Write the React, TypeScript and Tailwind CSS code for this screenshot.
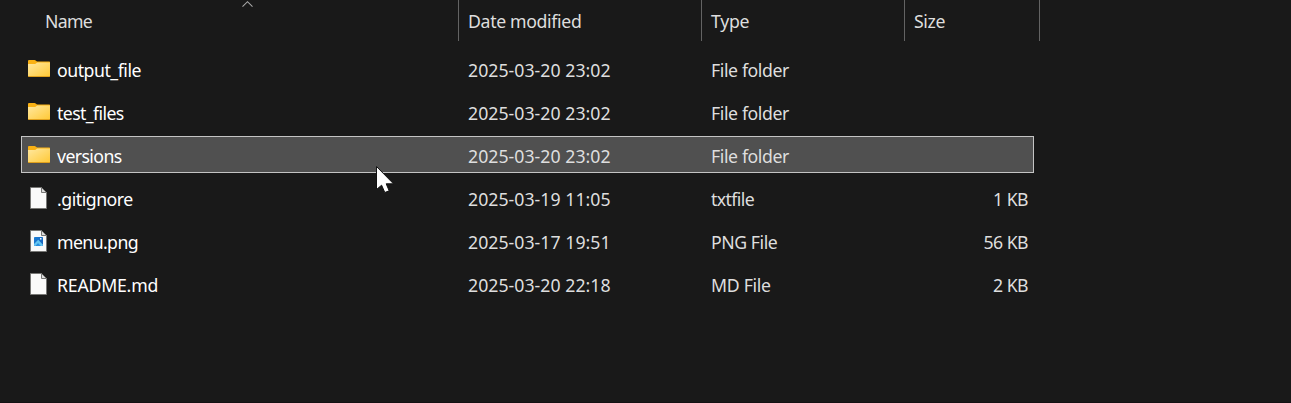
import type { ReactNode } from "react";

type Kind = "folder" | "file" | "image";

interface Entry {
  name: string;
  nameClass: string;
  date: string;
  type: string;
  typeClass: string;
  size?: string;
  kind: Kind;
  selected?: boolean;
}

const entries: Entry[] = [
  { name: "output_file", nameClass: "tracking-[-0.48px]", date: "2025-03-20 23:02", type: "File folder", typeClass: "tracking-[-0.4px]", kind: "folder" },
  { name: "test_files", nameClass: "tracking-[-0.6px]", date: "2025-03-20 23:02", type: "File folder", typeClass: "tracking-[-0.4px]", kind: "folder" },
  { name: "versions", nameClass: "tracking-[-0.6px]", date: "2025-03-20 23:02", type: "File folder", typeClass: "tracking-[-0.4px]", kind: "folder", selected: true },
  { name: ".gitignore", nameClass: "tracking-[-0.48px]", date: "2025-03-19 11:05", type: "txtfile", typeClass: "tracking-[-0.6px]", size: "1 KB", kind: "file" },
  { name: "menu.png", nameClass: "tracking-[-0.6px]", date: "2025-03-17 19:51", type: "PNG File", typeClass: "tracking-[-0.45px]", size: "56 KB", kind: "image" },
  { name: "README.md", nameClass: "tracking-[-0.22px]", date: "2025-03-20 22:18", type: "MD File", typeClass: "tracking-[-0.3px]", size: "2 KB", kind: "file" },
];

function FolderIcon() {
  return (
    <svg width="22" height="17" viewBox="0 0 22 17" className="mb-[3px] block">
      <defs>
        <linearGradient id="folderFront" x1="0" y1="0" x2="1" y2="1">
          <stop offset="0" stopColor="#ffe8a0" />
          <stop offset="1" stopColor="#ffc937" />
        </linearGradient>
      </defs>
      <path d="M0 1Q0 0 1 0H6.6Q7.2 0 7.7 .6L9 1.5H21.4Q22 1.5 22 2.2V16H0Z" fill="#f9b114" />
      <path d="M0 4H7.2L9.2 2.6H22V16.2H0Z" fill="url(#folderFront)" />
      <path d="M0 16H22V16.3Q22 17 21.3 17H.7Q0 17 0 16.3Z" fill="#e0a01c" />
    </svg>
  );
}

function FileIcon({ image = false }: { image?: boolean }) {
  return (
    <svg width="17" height="22" viewBox="0 0 17 22" className="mb-px ml-[2px] block">
      <defs>
        <linearGradient id="photo" x1="0" y1="0" x2="1" y2="1">
          <stop offset="0" stopColor="#1b7fd6" />
          <stop offset="1" stopColor="#1a5fb8" />
        </linearGradient>
      </defs>
      <path d="M.5 .5H11.5L16.5 5.5V21.5H.5Z" fill="#fafafa" stroke="#777775" />
      <path d="M11.5 .5V5.5H16.5Z" fill="#dcdcdc" stroke="#777775" />
      {image && (
        <g>
          <rect x="4" y="7" width="9" height="9" rx=".8" fill="url(#photo)" />
          <path d="M4 14L8.2 9.8L13 14.8V15Q13 16 12 16H10.5L8 13.5L5.5 16H5Q4 16 4 15Z" fill="#63c5f2" />
          <path d="M5.5 16L8 13.2L10.8 16Z" fill="#2a91df" />
          <rect x="10" y="8" width="1.5" height="1.5" fill="#e7f5ff" />
        </g>
      )}
    </svg>
  );
}

function HeaderCell({ children, className }: { children: ReactNode; className: string }) {
  return (
    <div className={`flex h-[41px] items-center border-r border-[#636363] text-[#dedede] ${className}`}>
      {children}
    </div>
  );
}

function Row({ entry }: { entry: Entry }) {
  return (
    <div
      className={`flex h-[37px] w-[1013px] items-center border pt-[2px] ${
        entry.selected ? "border-[#c4c4c4] bg-[#505050]" : "border-transparent"
      }`}
    >
      <div className="flex w-[446px] items-center pl-[6px]">
        <div className="w-[29px] shrink-0">
          {entry.kind === "folder" ? <FolderIcon /> : <FileIcon image={entry.kind === "image"} />}
        </div>
        <span className={`text-white ${entry.nameClass}`}>{entry.name}</span>
      </div>
      <div className="w-[243px] tracking-[0.03px] text-[#dedede]">{entry.date}</div>
      <div className={`w-[203px] text-[#dedede] ${entry.typeClass}`}>{entry.type}</div>
      <div className="flex-1 pr-[5px] text-right tracking-[-0.55px] text-[#dedede]">{entry.size}</div>
    </div>
  );
}

export default function App() {
  return (
    <main className="relative h-[403px] w-[1291px] cursor-default overflow-hidden border-b border-[#131113] bg-[#191919] font-['Noto_Sans',sans-serif] text-[17.7px] leading-6 whitespace-nowrap">
      <header className="flex">
        <HeaderCell className="w-[459px] pl-[45px] tracking-[-0.7px]">Name</HeaderCell>
        <HeaderCell className="w-[243px] pl-[9px] tracking-[-0.35px]">Date modified</HeaderCell>
        <HeaderCell className="w-[203px] pl-[9px] tracking-[-0.3px]">Type</HeaderCell>
        <HeaderCell className="w-[135px] pl-[9px] tracking-[-0.4px]">Size</HeaderCell>
      </header>
      <svg width="12" height="8" viewBox="0 0 12 8" className="absolute top-0 left-[242px]" fill="none" stroke="#a8a8a8" strokeWidth="1.1">
        <path d="M.5 6.7L5.5 1.7L10.5 6.7" />
      </svg>
      <section className="flex flex-col gap-[6px] pt-[9px] pl-[21px]">
        {entries.map((entry) => (
          <Row key={entry.name} entry={entry} />
        ))}
      </section>
      <svg width="22" height="30" viewBox="0 0 22 30" className="absolute top-[165px] left-[375px]">
        <path d="M1.5 1.5V24.5L6.6 20.2L9.8 27.5L14.2 25.8L11.2 18.8H18.5Z" fill="#fff" stroke="#111" strokeWidth="1" />
      </svg>
    </main>
  );
}
